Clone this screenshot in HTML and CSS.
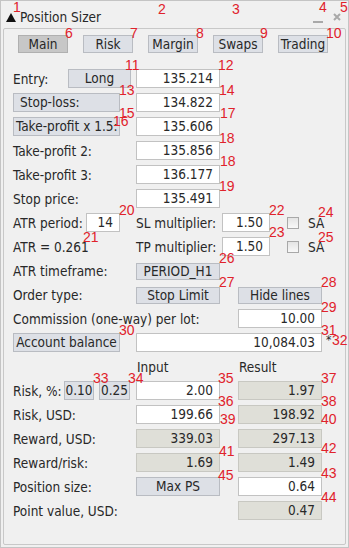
FILE: index.html
```html
<!DOCTYPE html>
<html lang="en">
<head>
    <meta charset="UTF-8">
    <title>Position Sizer</title>
    <link rel="stylesheet" href="styles.css">
</head>
<body>
    <div class="window">
        <div class="titlebar">
            <span class="caret"></span>
            <span class="title">Position Sizer</span>
            <span class="minimize"></span>
            <svg class="close" width="8" height="8" viewBox="0 0 8 8">
                <path d="M1 1 L7 7 M7 1 L1 7" stroke="#a9a9a9" stroke-width="2"/>
            </svg>
        </div>

        <div class="panel">
            <div class="tabs">
                <span class="tab active">Main</span>
                <span class="tab">Risk</span>
                <span class="tab">Margin</span>
                <span class="tab">Swaps</span>
                <span class="tab">Trading</span>
            </div>

            <div class="row">
                <span class="label w55">Entry:</span>
                <span class="btn w63">Long</span>
                <span class="field mleft5">135.214</span>
            </div>
            <div class="row">
                <span class="btn wide left">Stop-loss:</span>
                <span class="field mleft16">134.822</span>
            </div>
            <div class="row">
                <span class="btn wide tight">Take-profit x 1.5:</span>
                <span class="field mleft16">135.606</span>
            </div>
            <div class="row">
                <span class="label w123">Take-profit 2:</span>
                <span class="field">135.856</span>
            </div>
            <div class="row">
                <span class="label w123">Take-profit 3:</span>
                <span class="field">136.177</span>
            </div>
            <div class="row">
                <span class="label w123">Stop price:</span>
                <span class="field">135.491</span>
            </div>
            <div class="row">
                <span class="label w73">ATR period:</span>
                <span class="field small">14</span>
                <span class="label w86 mleft16">SL multiplier:</span>
                <span class="field mult">1.50</span>
                <span class="check"></span>
                <span class="label">SA</span>
            </div>
            <div class="row">
                <span class="label w123">ATR = 0.261</span>
                <span class="label w86">TP multiplier:</span>
                <span class="field mult">1.50</span>
                <span class="check"></span>
                <span class="label">SA</span>
            </div>
            <div class="row">
                <span class="label w123">ATR timeframe:</span>
                <span class="btn w84 short">PERIOD_H1</span>
            </div>
            <div class="row">
                <span class="label w123">Order type:</span>
                <span class="btn w84 short">Stop Limit</span>
                <span class="btn w84 short mleft18">Hide lines</span>
            </div>
            <div class="row">
                <span class="label w225">Commission (one-way) per lot:</span>
                <span class="field">10.00</span>
            </div>
            <div class="row">
                <span class="btn wide">Account balance</span>
                <span class="field long mleft16">10,084.03</span>
                <span class="asterisk">*</span>
            </div>
            <div class="row">
                <span class="label w123"></span>
                <span class="label w102 head">Input</span>
                <span class="label head">Result</span>
            </div>
            <div class="row">
                <span class="label w51">Risk, %:</span>
                <span class="btn w30">0.10</span>
                <span class="btn w31 mleft5">0.25</span>
                <span class="field mleft6">2.00</span>
                <span class="field readonly mleft18">1.97</span>
            </div>
            <div class="row">
                <span class="label w123">Risk, USD:</span>
                <span class="field">199.66</span>
                <span class="field readonly mleft18">198.92</span>
            </div>
            <div class="row">
                <span class="label w123">Reward, USD:</span>
                <span class="field readonly">339.03</span>
                <span class="field readonly mleft18">297.13</span>
            </div>
            <div class="row">
                <span class="label w123">Reward/risk:</span>
                <span class="field readonly">1.69</span>
                <span class="field readonly mleft18">1.49</span>
            </div>
            <div class="row">
                <span class="label w123">Position size:</span>
                <span class="btn w84">Max PS</span>
                <span class="field mleft18">0.64</span>
            </div>
            <div class="row">
                <span class="label w225">Point value, USD:</span>
                <span class="field readonly">0.47</span>
            </div>
        </div>

        <!-- annotation numbers drawn over the panel -->
        <div class="marks">
            <span class="mark" style="left:13px;top:0px">1</span>
            <span class="mark" style="left:158px;top:2px">2</span>
            <span class="mark" style="left:232px;top:2px">3</span>
            <span class="mark" style="left:319px;top:0px">4</span>
            <span class="mark" style="left:340px;top:0px">5</span>
            <span class="mark" style="left:65px;top:26px">6</span>
            <span class="mark" style="left:130px;top:26px">7</span>
            <span class="mark" style="left:196px;top:26px">8</span>
            <span class="mark" style="left:260px;top:26px">9</span>
            <span class="mark" style="left:326px;top:26px">10</span>
            <span class="mark" style="left:125px;top:58px">11</span>
            <span class="mark" style="left:218px;top:58px">12</span>
            <span class="mark" style="left:119px;top:83px">13</span>
            <span class="mark" style="left:219px;top:83px">14</span>
            <span class="mark" style="left:119px;top:106px">15</span>
            <span class="mark" style="left:113px;top:114px">16</span>
            <span class="mark" style="left:220px;top:106px">17</span>
            <span class="mark" style="left:219px;top:131px">18</span>
            <span class="mark" style="left:220px;top:154px">18</span>
            <span class="mark" style="left:219px;top:179px">19</span>
            <span class="mark" style="left:119px;top:203px">20</span>
            <span class="mark" style="left:83px;top:230px">21</span>
            <span class="mark" style="left:269px;top:203px">22</span>
            <span class="mark" style="left:269px;top:225px">23</span>
            <span class="mark" style="left:318px;top:205px">24</span>
            <span class="mark" style="left:318px;top:230px">25</span>
            <span class="mark" style="left:219px;top:251px">26</span>
            <span class="mark" style="left:219px;top:275px">27</span>
            <span class="mark" style="left:321px;top:275px">28</span>
            <span class="mark" style="left:321px;top:300px">29</span>
            <span class="mark" style="left:119px;top:323px">30</span>
            <span class="mark" style="left:321px;top:323px">31</span>
            <span class="mark" style="left:332px;top:333px">32</span>
            <span class="mark" style="left:93px;top:371px">33</span>
            <span class="mark" style="left:128px;top:371px">34</span>
            <span class="mark" style="left:218px;top:371px">35</span>
            <span class="mark" style="left:218px;top:394px">36</span>
            <span class="mark" style="left:321px;top:371px">37</span>
            <span class="mark" style="left:321px;top:394px">38</span>
            <span class="mark" style="left:220px;top:412px">39</span>
            <span class="mark" style="left:321px;top:412px">40</span>
            <span class="mark" style="left:219px;top:444px">41</span>
            <span class="mark" style="left:321px;top:441px">42</span>
            <span class="mark" style="left:321px;top:466px">43</span>
            <span class="mark" style="left:321px;top:490px">44</span>
            <span class="mark" style="left:218px;top:468px">45</span>
        </div>
    </div>
</body>
</html>
```

FILE: styles.css
```css
* {
    box-sizing: border-box;
}
body {
    margin: 0;
    background-color: #f0f0f0;
    font-family: "DejaVu Sans Condensed", "DejaVu Sans", sans-serif;
    font-size: 13.5px;
    color: #282828;
}
.window {
    position: relative;
    width: 349px;
    height: 548px;
    border: 1px solid #c4c4c4;
    background-color: #f0f0f0;
}
.titlebar {
    display: flex;
    align-items: center;
    height: 27px;
    padding: 4px 0 0 5px;
}
.caret {
    width: 0;
    height: 0;
    border-left: 5px solid transparent;
    border-right: 5px solid transparent;
    border-bottom: 9px solid #111;
    margin-top: 1px;
}
.title {
    margin-left: 4px;
}
.minimize {
    margin-left: auto;
    width: 10px;
    height: 2px;
    margin-top: 10px;
    background-color: #a9a9a9;
}
.close {
    margin: 0 7px 0 10px;
}
.panel {
    height: 517px;
    margin: 0 2px;
    border: 1px solid #c8c8c8;
    border-radius: 2px;
    padding: 6px 0 0 9px;
}
.tabs {
    display: flex;
    gap: 15px;
    margin: 0 0 16px 5px;
}
.tab {
    width: 50px;
    height: 18px;
    line-height: 16px;
    text-align: center;
    background-color: #dde0e6;
    border: 1px solid #b9bcc2;
}
.tab.active {
    background-color: #c7c7c7;
    border-color: #b0b0b0;
}
.row {
    display: flex;
    align-items: center;
    height: 19px;
    margin-bottom: 5px;
}
.label {
    white-space: nowrap;
    flex-shrink: 0;
}
.head {
    padding-left: 1px;
}
.w51 { width: 51px; }
.w55 { width: 55px; }
.w73 { width: 73px; }
.w86 { width: 86px; }
.w102 { width: 102px; }
.w123 { width: 123px; }
.w225 { width: 225px; }
.mleft5 { margin-left: 5px; }
.mleft6 { margin-left: 6px; }
.mleft16 { margin-left: 16px; }
.mleft18 { margin-left: 18px; }
.btn {
    flex-shrink: 0;
    height: 19px;
    line-height: 17px;
    text-align: center;
    white-space: nowrap;
    background-color: #dde0e6;
    border: 1px solid #b9bcc2;
    overflow: hidden;
}
.btn.wide {
    width: 107px;
}
.btn.left {
    text-align: left;
    padding-left: 6px;
}
.btn.tight {
    text-align: left;
    padding-left: 2px;
}
.btn.short {
    height: 17px;
    line-height: 15px;
    align-self: flex-end;
}
.w30 { width: 30px; }
.w31 { width: 31px; }
.w63 { width: 63px; }
.w84 { width: 84px; }
.field {
    flex-shrink: 0;
    width: 84px;
    height: 19px;
    line-height: 17px;
    text-align: right;
    padding-right: 6px;
    background-color: #fff;
    border: 1px solid #c2c2c2;
}
.field.small {
    width: 34px;
}
.field.mult {
    width: 48px;
}
.field.long {
    width: 186px;
}
.field.readonly {
    background-color: #dfdfd8;
    border-color: #c8c8c2;
}
.check {
    width: 12px;
    height: 12px;
    margin: 0 9px 0 17px;
    border: 1px solid #a8a8a8;
    background: linear-gradient(#e4e4e4, #f8f8f8);
}
.asterisk {
    margin-left: 4px;
    align-self: flex-start;
    font-size: 12px;
}
.marks {
    position: absolute;
    left: -1px;
    top: -1px;
}
.mark {
    position: absolute;
    font-family: "Liberation Sans", Arial, sans-serif;
    font-size: 14px;
    line-height: 14px;
    color: #e0222b;
}
```
